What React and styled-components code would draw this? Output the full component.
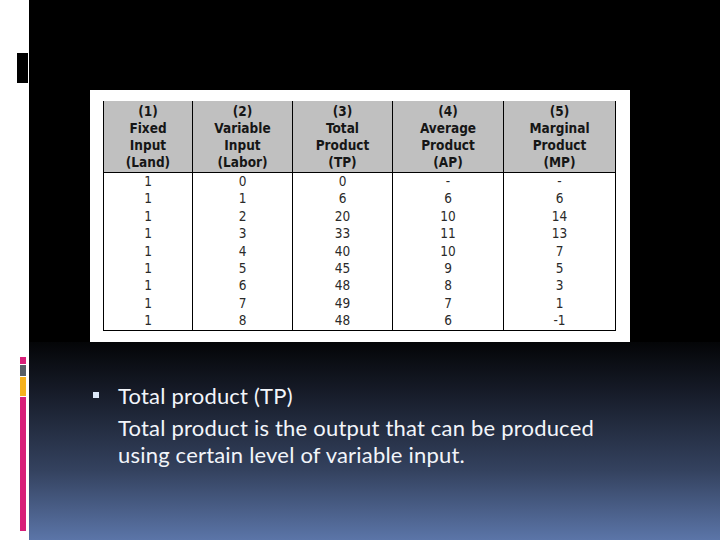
import styled, { createGlobalStyle } from "styled-components";

const Global = createGlobalStyle`
  html, body { margin: 0; padding: 0; background: #fff; }
  body { width: 720px; height: 540px; overflow: hidden; }
`;

const Slide = styled.div`
  display: flex;
  width: 720px;
  height: 540px;
`;

const LeftStrip = styled.div`
  width: 29px;
  flex: none;
  background: #fff;
  display: flex;
  flex-direction: column;
  padding-top: 53px;
  box-sizing: border-box;
`;

const Tab = styled.div`
  width: 11px;
  height: 30px;
  margin-left: 17px;
  background: #000;
`;

const Accent = styled.div`
  display: flex;
  flex-direction: column;
  gap: 1px;
  margin-top: 274px;
  margin-left: 20px;
  width: 6px;
`;

const AccentBit = styled.div`
  height: ${(p) => p.$h}px;
  background: ${(p) => p.$c};
`;

const Main = styled.div`
  flex: 1;
  display: flex;
  flex-direction: column;
  background: #000;
`;

const Picture = styled.div`
  height: 342px;
  flex: none;
  background: #000;
  padding: 90px 0 0 61px;
  box-sizing: border-box;
`;

const Frame = styled.div`
  width: 540px;
  height: 252px;
  background: #fff;
  padding: 11px 15px 13px 13px;
  box-sizing: border-box;
`;

const Table = styled.table`
  border-collapse: collapse;
  table-layout: fixed;
  width: 512px;
  font-family: "DejaVu Sans Condensed", "DejaVu Sans", sans-serif;
  font-size: 13.5px;
  color: #222;
  border-left: 1px solid #000;
  border-right: 1px solid #000;
  border-bottom: 1px solid #000;
`;

const Th = styled.th`
  background: #c0c0c0;
  color: #161616;
  font-weight: bold;
  line-height: 17px;
  padding: 2px 0 1px;
  border-left: 1px solid #000;
  border-bottom: 1px solid #000;
  text-align: center;
  vertical-align: top;
`;

const Td = styled.td`
  border-left: 1px solid #000;
  padding: 0;
  height: 17.4px;
  line-height: 17.4px;
  text-align: center;
  color: #2a2a2a;
`;

const Lower = styled.div`
  flex: 1;
  background: linear-gradient(180deg, #040507 0%, #161b28 25%, #34425f 65%, #5b75a8 100%);
  padding: 40px 0 0 64px;
  box-sizing: border-box;
  font-family: Lato, "Open Sans", sans-serif;
  color: #f2f5fa;
  font-size: 22px;
  letter-spacing: 0.2px;
`;

const Bullet = styled.div`
  display: flex;
  align-items: flex-start;
  gap: 19px;
  line-height: 27px;
`;

const Square = styled.span`
  width: 6px;
  height: 6px;
  margin-top: 10px;
  background: #dde8f8;
  flex: none;
`;

const Para = styled.p`
  margin: 6px 0 0 25px;
  line-height: 26.5px;
  width: 505px;
`;

const headers = [
  ["(1)", "Fixed", "Input", "(Land)"],
  ["(2)", "Variable", "Input", "(Labor)"],
  ["(3)", "Total", "Product", "(TP)"],
  ["(4)", "Average", "Product", "(AP)"],
  ["(5)", "Marginal", "Product", "(MP)"],
];

const widths = [89, 100, 100, 111, 112];

const rows = [
  [1, 0, 0, "-", "-"],
  [1, 1, 6, 6, 6],
  [1, 2, 20, 10, 14],
  [1, 3, 33, 11, 13],
  [1, 4, 40, 10, 7],
  [1, 5, 45, 9, 5],
  [1, 6, 48, 8, 3],
  [1, 7, 49, 7, 1],
  [1, 8, 48, 6, -1],
];

export default function App() {
  return (
    <>
      <Global />
      <Slide>
        <LeftStrip>
          <Tab />
          <Accent>
            <AccentBit $h={7} $c="#d81f79" />
            <AccentBit $h={11} $c="#575e66" />
            <AccentBit $h={19} $c="#f6b21d" />
            <AccentBit $h={134} $c="#d81f79" />
          </Accent>
        </LeftStrip>
        <Main>
          <Picture>
            <Frame>
              <Table>
                <colgroup>
                  {widths.map((w, i) => (
                    <col key={i} style={{ width: w }} />
                  ))}
                </colgroup>
                <thead>
                  <tr>
                    {headers.map((h, i) => (
                      <Th key={i}>
                        {h.map((line, j) => (
                          <div key={j}>{line}</div>
                        ))}
                      </Th>
                    ))}
                  </tr>
                </thead>
                <tbody>
                  {rows.map((r, i) => (
                    <tr key={i}>
                      {r.map((v, j) => (
                        <Td key={j}>{v}</Td>
                      ))}
                    </tr>
                  ))}
                </tbody>
              </Table>
            </Frame>
          </Picture>
          <Lower>
            <Bullet>
              <Square />
              <span>Total product (TP)</span>
            </Bullet>
            <Para>
              Total product is the output that can be produced using certain
              level of variable input.
            </Para>
          </Lower>
        </Main>
      </Slide>
    </>
  );
}
